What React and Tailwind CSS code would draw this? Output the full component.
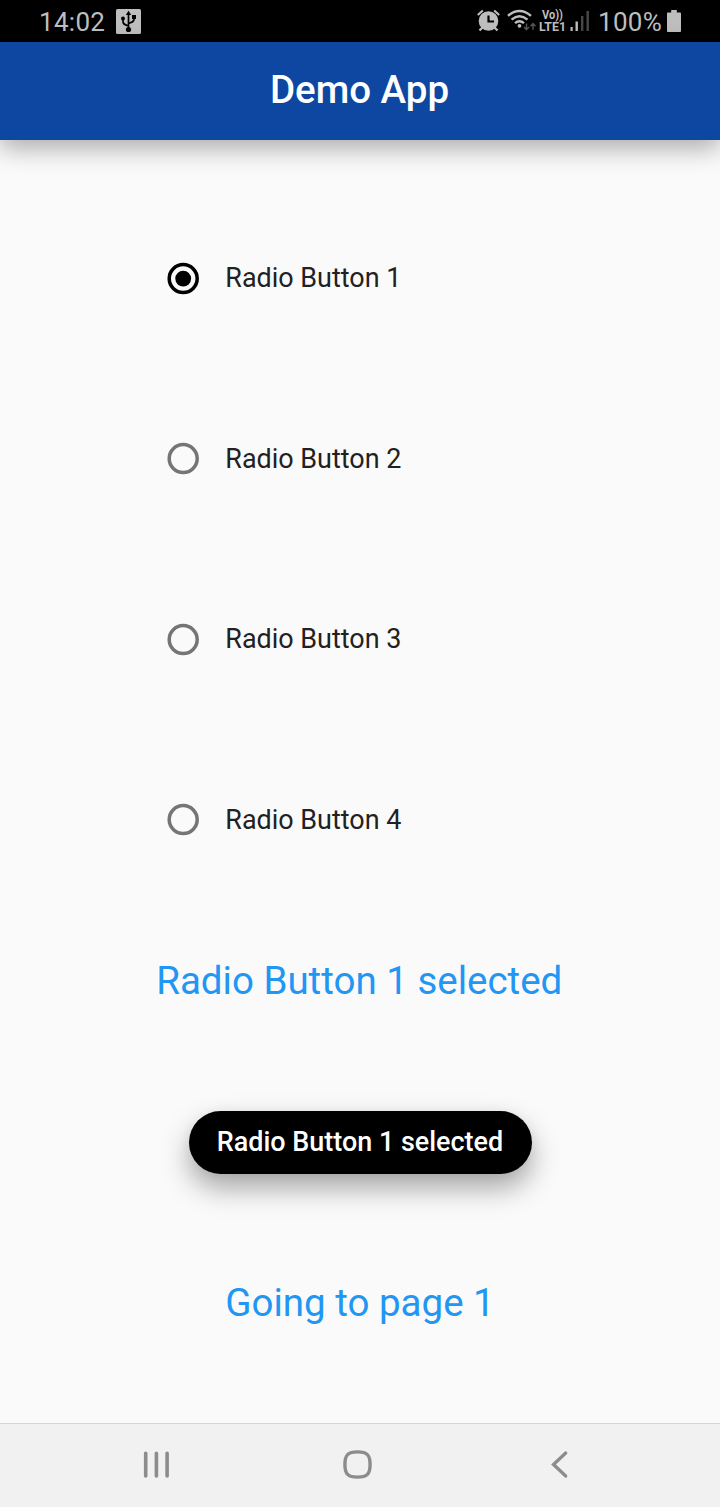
import React, { useState } from "react";

const OPTIONS = [1, 2, 3, 4];

function StatusBar() {
  return (
    <div className="flex h-[42px] items-center justify-between bg-black pl-[39px] pr-[39px] text-[#bebebe]">
      <div className="flex h-full items-center">
        <span className="w-[77px] pt-[2px] text-[26px] leading-[42px] tracking-[0.3px]">14:02</span>
        <svg width="25" height="25" viewBox="0 0 25 25">
          <rect width="25" height="25" rx="1.5" fill="#bebebe" />
          <g fill="none" stroke="#000" strokeWidth="1.7">
            <path d="M12.5 5v16M12.5 17c-4-1.4-5.5-2-5.5-4.200V10M12.500 14.500c4-1.400 5.500-2 5.500-4.200V8" />
          </g>
          <path d="M12.500 1.800l2.700 4.200h-5.400z" />
          <circle cx="12.500" cy="20.500" r="2.600" />
          <circle cx="7" cy="9.500" r="2" />
          <rect x="16" y="6" width="4" height="4" />
        </svg>
      </div>
      <div className="flex h-full items-center">
        <svg width="122" height="42" viewBox="0 0 122 42" fontFamily="Roboto, sans-serif">
          <g fill="none" stroke="#bebebe">
            <path d="M1.800 15l5-4.500M18.200 10.500l5 4.500" strokeWidth="2.200" />
            <path d="M6.500 27.500l-3 3M18.500 27.500l3 3" strokeWidth="2.400" />
          </g>
          <circle cx="12.500" cy="21" r="9.800" fill="#bebebe" />
          <path d="M12.500 15.500v6h5.500" fill="none" stroke="#000" strokeWidth="2.200" />
          <g fill="none" stroke="#bebebe" strokeWidth="2.400">
            <path d="M32 15.800Q43.500 6.200 55 15.800M35.500 19.600Q43.500 12.800 51.500 19.600M39 23.200Q43.500 19.200 48 23.200" />
          </g>
          <circle cx="43.500" cy="25.800" r="1.900" fill="#bebebe" />
          <g fill="none" stroke="#555" strokeWidth="1.500">
            <path d="M50.500 23.500v6M48 27l2.500 2.700L53 27M57 29.700v-6M54.500 26.200l2.500-2.700 2.500 2.700" />
          </g>
          <text x="66" y="19" fill="#bebebe" fontSize="12" fontWeight="700" textLength="21" lengthAdjust="spacingAndGlyphs">Vo))</text>
          <text x="63" y="31" fill="#bebebe" fontSize="12.500" fontWeight="700" textLength="27" lengthAdjust="spacingAndGlyphs">LTE1</text>
          <g fill="#bebebe">
            <rect x="94.500" y="27" width="2.200" height="4" />
            <rect x="99.500" y="21.500" width="2.400" height="9.500" />
          </g>
          <g fill="#484848">
            <rect x="105" y="16" width="2.400" height="15" />
            <rect x="110.500" y="11" width="2.400" height="20" />
          </g>
        </svg>
        <span className="w-[69px] pt-[2px] text-[26px] leading-[42px] tracking-[0.3px]">100%</span>
        <svg width="14" height="22" viewBox="0 0 15 22" preserveAspectRatio="none" fill="#bebebe">
          <path d="M4.500 0h6v2.500H14a1 1 0 0 1 1 1V21a1 1 0 0 1-1 1H1a1 1 0 0 1-1-1V3.500a1 1 0 0 1 1-1h3.500z" />
        </svg>
      </div>
    </div>
  );
}

function RadioRow({ label, checked, onSelect }) {
  return (
    <button
      type="button"
      role="radio"
      aria-checked={checked}
      onClick={onSelect}
      className="flex h-[180.5px] w-full items-center pl-[167px] text-left"
    >
      <svg width="32" height="33" viewBox="0 0 32 33" className={checked ? "text-black" : "text-[#757575]"}>
        <circle cx="16.2" cy="16.6" r="14" fill="none" stroke="currentColor" strokeWidth="3.5" />
        {checked && <circle cx="16.2" cy="16.6" r="7.900" fill="currentColor" />}
      </svg>
      <span className="ml-[26.3px] text-[26.95px] leading-[32px] text-[#212121]">{label}</span>
    </button>
  );
}

function NavBar() {
  return (
    <nav className="flex h-[84px] items-start border-t border-[#d5d5d5] bg-[#f1f1f1] pl-[142px] pt-[25px]">
      <svg width="29" height="32" viewBox="0 0 29 32" fill="none" stroke="#8c8c8c" strokeWidth="3.600" strokeLinecap="round">
        <path d="M3.700 4.300v22.700M14.400 4.300v22.700M25.100 4.300v22.700" />
      </svg>
      <svg width="32" height="32" viewBox="0 0 32 32" className="ml-[170px]" fill="none" stroke="#8c8c8c" strokeWidth="3.400">
        <path d="M16.500 2.900c9.600 0 12.600 3 12.600 12.600s-3 12.600-12.600 12.600-12.600-3-12.600-12.600 3-12.600 12.600-12.600z" />
      </svg>
      <svg width="20" height="32" viewBox="0 0 20 32" className="ml-[177px]" fill="none" stroke="#8c8c8c" strokeWidth="3.300" strokeLinecap="round">
        <path d="M15.700 4L3.500 15.500l12.200 11.500" />
      </svg>
    </nav>
  );
}

export default function App() {
  const [selected, setSelected] = useState(1);
  return (
    <div className="flex h-[1507px] w-[720px] flex-col overflow-hidden bg-[#fafafa] font-[Roboto,sans-serif]">
      <StatusBar />
      <header className="z-10 flex h-[98px] items-center justify-center bg-[#0d47a1] pb-[2px] pr-[1px] shadow-[0_8px_24px_rgba(0,0,0,0.32)]">
        <h1 className="text-[38.5px] font-medium leading-[46px] text-white">Demo App</h1>
      </header>
      <main className="flex flex-1 flex-col items-center pt-[48px]">
        <div role="radiogroup" className="w-full">
          {OPTIONS.map((n) => (
            <RadioRow key={n} label={`Radio Button ${n}`} checked={selected === n} onSelect={() => setSelected(n)} />
          ))}
        </div>
        <p className="mt-[48px] pr-[1.5px] text-[38.5px] leading-[46px] text-[#2196f3]">Radio Button {selected} selected</p>
        <button
          type="button"
          className="mt-[107px] flex h-[63px] w-[343px] items-center justify-center rounded-[31.5px] bg-black text-[26.95px] font-medium text-white shadow-[0_14px_28px_rgba(0,0,0,0.34),0_0_12px_rgba(0,0,0,0.04)]"
        >
          Radio Button {selected} selected
        </button>
        <p className="mt-[106px] text-[38.5px] leading-[46px] text-[#2196f3]">Going to page {selected}</p>
      </main>
      <NavBar />
    </div>
  );
}
